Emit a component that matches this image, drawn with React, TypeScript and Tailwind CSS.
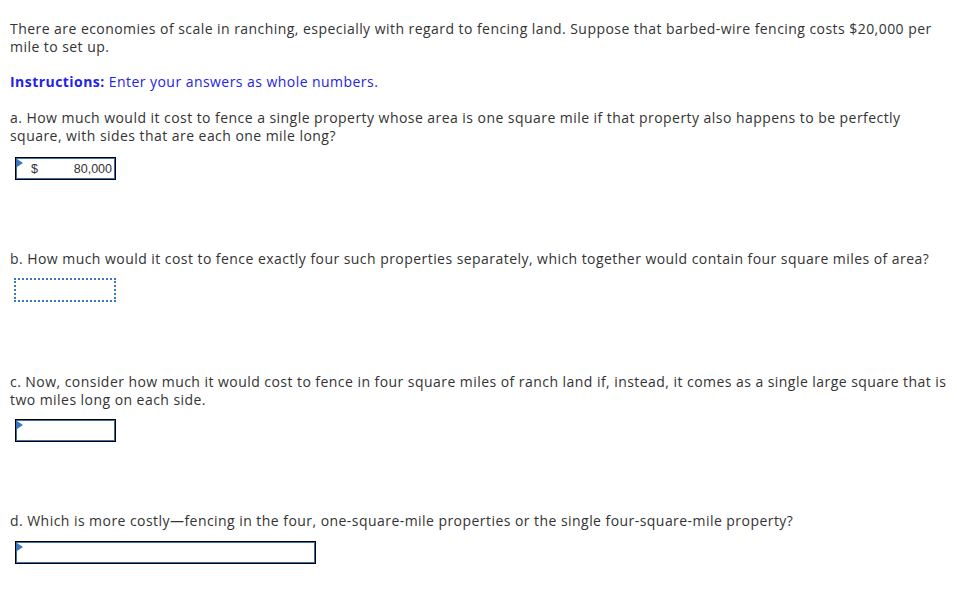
import React from "react";

function Flag() {
  return (
    <svg className="absolute left-[1px] top-[1px]" width="6" height="8" viewBox="0 0 6 8">
      <path d="M0 0 L6 4 L0 8 Z" fill="#3b78c0" />
    </svg>
  );
}

function AnswerBox({ wide, value }: { wide?: boolean; value?: string }) {
  return (
    <div
      className={`relative flex h-[23px] items-center border border-black bg-white shadow-[inset_0_0_0_1px_#3a6fb0] ${
        wide ? "w-[301px]" : "w-[101px]"
      }`}
    >
      <Flag />
      {value ? (
        <div className="flex w-full items-center justify-between pl-[15px] pr-[3px] font-['Liberation_Sans',Arial,sans-serif] text-[12.5px] tracking-normal text-[#333]">
          <span>$</span>
          <span>{value}</span>
        </div>
      ) : null}
    </div>
  );
}

export default function App() {
  return (
    <div className="min-h-[614px] bg-white px-[10px] pt-[20px] font-['Open_Sans',sans-serif] text-[14px] leading-[18px] tracking-[0.45px] text-[#333]">
      <p>
        There are economies of scale in ranching, especially with regard to fencing land. Suppose that
        barbed-wire fencing costs $20,000 per mile to set up.
      </p>

      <p className="mt-[17px] text-[#2323e6]">
        <span className="font-bold">Instructions:</span> Enter your answers as whole numbers.
      </p>

      <p className="mt-[18px]">
        a. How much would it cost to fence a single property whose area is one square mile if that property
        also happens to be perfectly square, with sides that are each one mile long?
      </p>
      <div className="ml-[5px] mt-[12px]">
        <AnswerBox value="80,000" />
      </div>

      <p className="mt-[70px]">
        b. How much would it cost to fence exactly four such properties separately, which together would
        contain four square miles of area?
      </p>
      <div className="ml-[4px] mt-[10px] h-[24px] w-[102px] border-2 border-dotted border-[#3b78c0]" />

      <p className="mt-[71px]">
        c. Now, consider how much it would cost to fence in four square miles of ranch land if, instead, it
        comes as a single large square that is two miles long on each side.
      </p>
      <div className="ml-[5px] mt-[10px]">
        <AnswerBox />
      </div>

      <p className="mt-[70px]">
        d. Which is more costly—fencing in the four, one-square-mile properties or the single
        four-square-mile property?
      </p>
      <div className="ml-[5px] mt-[11px]">
        <AnswerBox wide />
      </div>
    </div>
  );
}
